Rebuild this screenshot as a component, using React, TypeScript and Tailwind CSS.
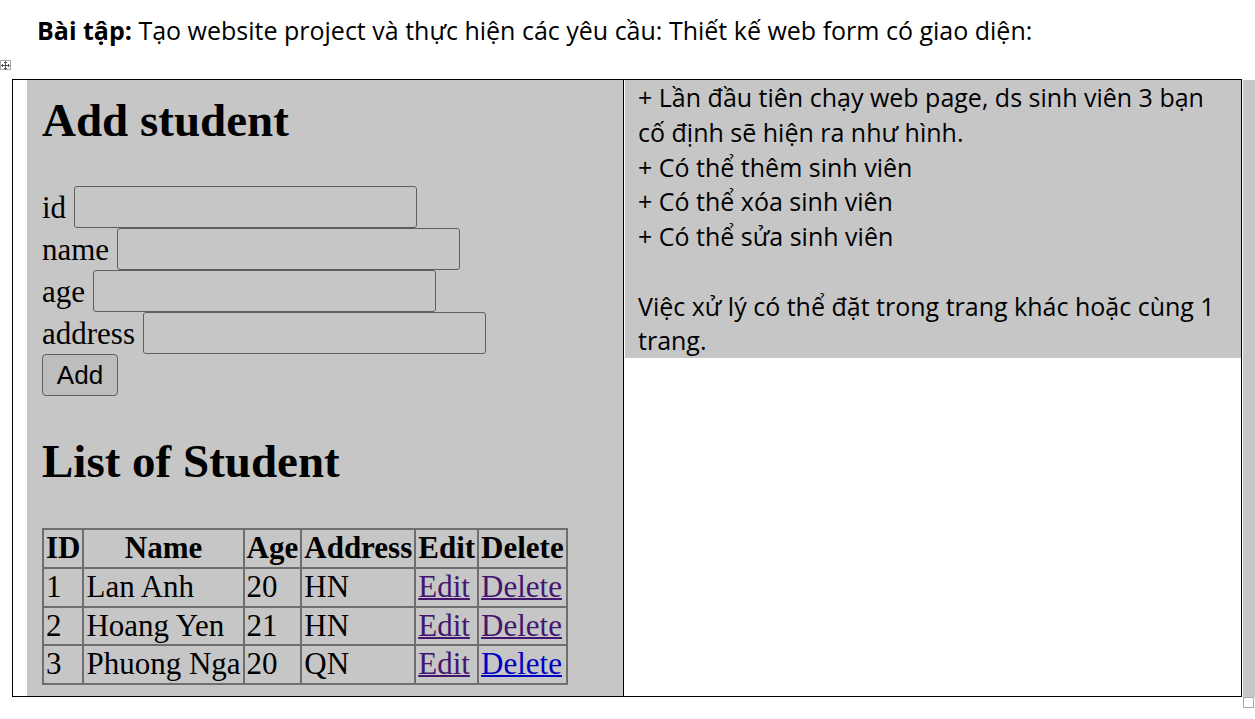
import React from 'react';

const students = [
  { id: 1, name: 'Lan Anh', age: 20, address: 'HN', deleteVisited: true },
  { id: 2, name: 'Hoang Yen', age: 21, address: 'HN', deleteVisited: true },
  { id: 3, name: 'Phuong Nga', age: 20, address: 'QN', deleteVisited: false },
];

const notes = [
  '+ Lần đầu tiên chạy web page, ds sinh viên 3 bạn',
  'cố định sẽ hiện ra như hình.',
  '+ Có thể thêm sinh viên',
  '+ Có thể xóa sinh viên',
  '+ Có thể sửa sinh viên',
  '',
  'Việc xử lý có thể đặt trong trang khác hoặc cùng 1',
  'trang.',
];

function Field({ label }: { label: string }) {
  return (
    <div className="h-[42px] flex items-center gap-[8px]">
      <span className="leading-none">{label}</span>
      <input className="w-[343px] h-[42px] border border-[#5e5e5e] rounded-[3px] bg-transparent outline-none" />
    </div>
  );
}

export default function App() {
  const cell = 'border-2 border-[#6e6e6e] px-[2px] py-[1px] leading-[34.75px]';

  return (
    <div className="w-[1255px] h-[719px] bg-white overflow-hidden text-black">
      {/* Tiêu đề */}
      <div className="h-[60px] pl-[37px] pt-[13px] font-['Open_Sans',sans-serif] text-[25px] leading-[34.75px] whitespace-nowrap">
        <b>Bài tập:</b> Tạo website project và thực hiện các yêu cầu: Thiết kế web form có giao diện:
      </div>

      {/* Nút di chuyển bảng */}
      <div className="h-[19px]">
        <div className="w-[11px] h-[10px] border border-[#a8a8a8] flex items-center justify-center">
          <svg width="9" height="9" viewBox="0 0 9 9" fill="none" stroke="#555" strokeWidth="1">
            <line x1="4.5" y1="0.5" x2="4.5" y2="8.5" />
            <line x1="0.5" y1="4.5" x2="8.5" y2="4.5" />
            <polyline points="3,2 4.5,0.5 6,2" />
            <polyline points="3,7 4.5,8.5 6,7" />
            <polyline points="2,3 0.5,4.5 2,6" />
            <polyline points="7,3 8.5,4.5 7,6" />
          </svg>
        </div>
      </div>

      <div className="flex ml-[12px]">
        <div className="w-[1230px] h-[618px] border border-black flex">
          {/* Cột trái: ảnh chụp form */}
          <div className="w-[611px] border-r border-black pl-[14px] flex">
            <div className="flex-1 bg-[#c6c6c6] pl-[15px] pt-[17px] font-['Liberation_Serif',serif] text-[31px]">
              <h2 className="text-[47px] font-bold leading-none">Add student</h2>
              <div className="mt-[42px]">
                <Field label="id" />
                <Field label="name" />
                <Field label="age" />
                <Field label="address" />
                <div className="h-[42px] flex items-center">
                  <button className="w-[76px] h-[42px] border border-[#5e5e5e] rounded-[4px] bg-[#bdbdbd] font-['Liberation_Sans',sans-serif] text-[26px] leading-none">
                    Add
                  </button>
                </div>
              </div>
              <h2 className="mt-[42px] text-[47px] font-bold leading-none">List of Student</h2>
              <table className="mt-[43px] border-collapse">
                <thead>
                  <tr>
                    <th className={cell}>ID</th>
                    <th className={cell}>Name</th>
                    <th className={cell}>Age</th>
                    <th className={cell}>Address</th>
                    <th className={cell}>Edit</th>
                    <th className={cell}>Delete</th>
                  </tr>
                </thead>
                <tbody>
                  {students.map(s => (
                    <tr key={s.id}>
                      <td className={cell}>{s.id}</td>
                      <td className={cell}>{s.name}</td>
                      <td className={cell}>{s.age}</td>
                      <td className={cell}>{s.address}</td>
                      <td className={cell}>
                        <a className="text-[#44176e] underline decoration-2">Edit</a>
                      </td>
                      <td className={cell}>
                        <a className={`underline decoration-2 ${s.deleteVisited ? 'text-[#44176e]' : 'text-[#0000c0]'}`}>Delete</a>
                      </td>
                    </tr>
                  ))}
                </tbody>
              </table>
            </div>
          </div>

          {/* Cột phải: yêu cầu */}
          <div className="flex-1 pl-[1px]">
            <div className="bg-[#c6c6c6] pl-[13px] font-['Open_Sans',sans-serif] text-[25px] leading-[34.75px] whitespace-nowrap">
              {notes.map((line, i) => (
                <div key={i} className="h-[34.75px]">{line}</div>
              ))}
            </div>
          </div>
        </div>

        {/* Thanh chỉnh cỡ bảng của Word */}
        <div className="ml-[1px] w-[12px] flex flex-col">
          <div className="mt-[1px] h-[617px] bg-[#c6c6c6]" />
          <div className="w-[11px] h-[11px] border border-[#a8a8a8] bg-white" />
        </div>
      </div>
    </div>
  );
}
